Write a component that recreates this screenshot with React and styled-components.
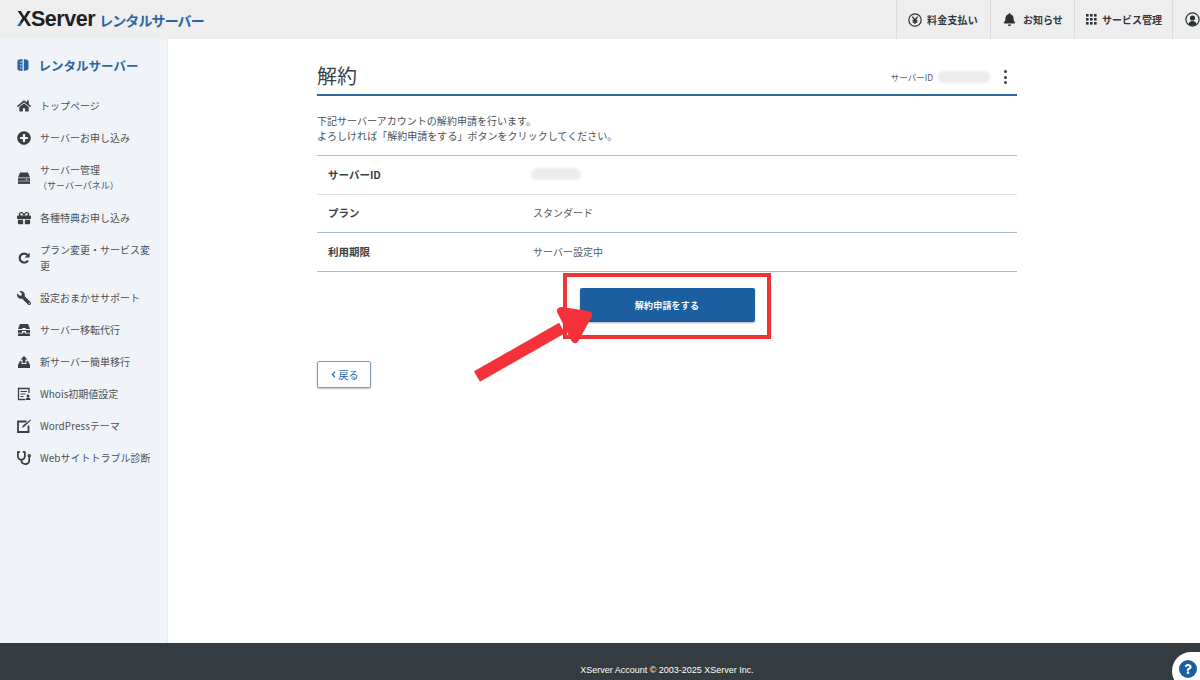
import React from "react";
import styled, { createGlobalStyle } from "styled-components";
import { FaHome, FaPlusCircle, FaGift, FaWrench, FaBell, FaStethoscope, FaChevronLeft, FaQuestion } from "react-icons/fa";

const Global = createGlobalStyle`
  html, body { margin: 0; padding: 0; height: 100%; overflow: hidden; background: #fff; }
  body { font-family: "Noto Sans CJK JP", "Noto Sans", sans-serif; color: #43484d; }
  * { box-sizing: border-box; }
`;
const Page = styled.div`width: 1200px; height: 680px; display: flex; flex-direction: column; overflow: hidden; position: relative;`;
const Header = styled.header`height: 39px; flex: none; background: #eeeeee; display: flex; align-items: center; justify-content: space-between;`;
const Logo = styled.div`display: flex; align-items: center; padding-left: 17px; gap: 4px;`;
const LogoMark = styled.span`
  font: 700 21.5px/1 "Liberation Sans", sans-serif; letter-spacing: -0.45px; color: #1d2024;
  b { font-weight: 700; background: linear-gradient(to top right, #2a66a5 32%, #1d2024 32%); -webkit-background-clip: text; background-clip: text; color: transparent; }
`;
const LogoSub = styled.span`font-size: 14px; font-weight: 700; color: #2a66a5; letter-spacing: -0.9px; line-height: 1;`;
const HeaderNav = styled.nav`display: flex; height: 100%;`;
const HeaderItem = styled.div`
  width: ${p => p.$w}px; height: 100%; display: flex; align-items: center; gap: ${p => p.$gap}px;
  padding-left: ${p => p.$pad}px; border-left: 1px solid #dcdcdc;
  font-size: 10px; font-weight: 700; color: #33383c; white-space: nowrap; letter-spacing: ${p => p.$ls || 0}px;
  svg { flex: none; }
`;
const Body = styled.div`flex: 1; display: flex; min-height: 0;`;
const Sidebar = styled.aside`width: 168px; flex: none; background: #f0f4f8; border-right: 1px solid #e6eaef; padding: 17px 0 0 17px;`;
const SideTitle = styled.div`display: flex; align-items: center; gap: 9.5px; height: 18px; font-size: 12.5px; font-weight: 700; color: #2a66a5; margin-bottom: 15.5px;`;
const SideList = styled.ul`list-style: none; margin: 0; padding: 0; display: flex; flex-direction: column;`;
const SideRow = styled.li`
  display: flex; align-items: center; gap: 9px; padding: 8px 0; min-height: 32px; width: 140px;
  font-size: 10px; line-height: 16px; color: #4c5157;
  svg { flex: none; width: 14px; height: 14px; color: #3a3f44; }
`;
const Wrench = styled(FaWrench)`transform: scaleX(-1);`;
const Sub = styled.span`display: block; font-size: 9px; margin-left: -2px;`;
const Main = styled.main`flex: 1; padding: 25px 0 0 149px;`;
const Column = styled.div`width: 700px;`;
const TitleRow = styled.div`height: 32px; border-bottom: 2px solid #2a66a5; display: flex; justify-content: space-between; align-items: center; padding-bottom: 6px;`;
const Title = styled.h1`margin: 0; font-size: 20px; font-weight: 400; color: #3a3f44; line-height: 26px;`;
const ServerId = styled.div`display: flex; align-items: center; gap: 5px; font-size: 8.5px; color: #55595e; padding: 2px 10px 0 0;`;
const Blur = styled.span`display: block; width: ${p => p.$w}px; height: ${p => p.$h}px; margin-left: ${p => p.$ml || 0}px; border-radius: 7px; background: #ececec; filter: blur(1.2px);`;
const Dots = styled.span`display: flex; flex-direction: column; gap: 2.5px; margin-left: 9px; i { width: 3px; height: 3px; border-radius: 50%; background: #3a3f44; }`;
const Intro = styled.p`margin: 16.5px 0 12.5px; font-size: 10px; line-height: 15px; color: #4c5157; letter-spacing: 0.03px;`;
const Table = styled.div`border-top: 1px solid #a9bccf;`;
const Row = styled.div`display: grid; grid-template-columns: 205px 1fr; align-items: center; height: 38.5px; padding: 0 0 1px 11px; border-bottom: ${p => p.$soft ? "1.5px solid #dde2e6" : "1px solid #a9bccf"}; font-size: 10px; color: #55595e;`;
const Cell = styled.div`font-weight: 700; font-size: 10.5px; color: #3a3f44;`;
const Action = styled.div`position: relative; display: flex; justify-content: center; padding-top: 16.5px;`;
const Primary = styled.button`width: 175px; height: 34px; background: #1b5fa0; border: 0; border-radius: 2px; box-shadow: 0 1px 2px rgba(0,0,0,.3); color: #fff; font: 700 9px "Noto Sans CJK JP", sans-serif; letter-spacing: .2px;`;
const Highlight = styled.div`position: absolute; left: 246px; top: 1.5px; width: 208px; height: 66px; border: 4px solid #ef3438; pointer-events: none;`;
const Arrow = styled.svg`position: absolute; left: 150px; top: 29.5px; pointer-events: none;`;
const Back = styled.button`
  margin-top: 39px; width: 54px; height: 27px; display: flex; align-items: center; justify-content: center; gap: 2px;
  background: #fff; border: 1px solid #7a9dbf; border-radius: 2px; box-shadow: 0 1px 2px rgba(0,0,0,.25);
  color: #2a66a5; font: 400 10px "Noto Sans CJK JP", sans-serif;
`;
const Footer = styled.footer`height: 37px; flex: none; background: #343b41; padding: 21px 0 0 317px; position: relative;`;
const FooterText = styled.div`width: 700px; text-align: center; font: 9px/12px "Liberation Sans", sans-serif; color: #fff;`;
const Help = styled.div`position: absolute; right: -10px; top: 9px; width: 38px; height: 38px; border-radius: 50% 0 0 50%; background: #fff; padding: 8px 0 0 7px;`;
const HelpDot = styled.div`width: 18px; height: 18px; border-radius: 50%; background: #1b5fa0; color: #fff; display: flex; align-items: center; justify-content: center;`;

const Book = () => (<svg width="12" height="14" viewBox="0 0 12 14"><path fill="#2a66a5" d="M5.5 1 2 1.6C1 1.8.4 2.5.4 3.5v7c0 1 .6 1.7 1.6 1.9l3.5.6z"/><path fill="#2a66a5" d="M6.8 1 10 1.8c.9.2 1.5 1 1.5 1.9v6.6c0 .9-.6 1.7-1.5 1.9L6.8 13z"/><path stroke="#f0f4f8" strokeWidth="1" d="M3 4h1.6M3 7h1.6M3 10h1.6"/></svg>);
const Yen = () => (<svg width="14" height="14" viewBox="0 0 14 14" fill="none" stroke="#2c3135"><circle cx="7" cy="7" r="6.2" strokeWidth="1.2"/><path strokeWidth="1.3" d="M4.3 3.6 7 7l2.7-3.4M7 7v4M4.6 7.5h4.8M4.6 9.2h4.8"/></svg>);
const Grid = () => (<svg width="11" height="11" viewBox="0 0 11 11" fill="#2c3135">{[0,4,8].flatMap(y => [0,4,8].map(x => <rect key={`${x}-${y}`} x={x} y={y} width="2.6" height="2.6"/>))}</svg>);
const User = () => (<svg width="15" height="15" viewBox="0 0 15 15"><circle cx="7.5" cy="7.5" r="6.6" fill="none" stroke="#2c3135" strokeWidth="1.2"/><circle cx="7.5" cy="6" r="2.6" fill="#2c3135"/><path fill="#2c3135" d="M3.4 12c.6-2 2.2-3 4.1-3s3.5 1 4.1 3c-1 1-2.5 1.5-4.1 1.5S4.4 13 3.4 12z"/></svg>);
const Server = () => (<svg viewBox="0 0 14 14" fill="currentColor"><path d="M3 1.5h8l2 5H1z"/><path fillRule="evenodd" d="M1 7.3h12v2.4H1zM9.5 8a.6.6 0 1 0 0 1.2.6.6 0 0 0 0-1.2z"/><path d="M1 10.3h12v2.6H1z"/></svg>);
const Refresh = () => (<svg viewBox="0 0 14 14" fill="none" stroke="currentColor" strokeWidth="2.2"><path d="M11 9.5A4.5 4.5 0 1 1 10.5 4"/><path fill="currentColor" stroke="none" d="M12.6 1.5v5h-5z"/></svg>);
const Move = () => (<svg viewBox="0 0 14 14" fill="currentColor"><path d="M3 1h8l2 5H8.8V5H5.2v1H1z"/><path d="M1 7h12v2.8H9V8H5v1.8H1zM1 10.6h5V9.5h2v1.1h5V13H1z"/></svg>);
const Upload = () => (<svg viewBox="0 0 14 14" fill="currentColor"><path d="M7 1l3.5 3.5H8.4V8H5.6V4.5H3.5z"/><path d="M3 6h1.5v3h5V6H11l2 4v3H1v-3z"/></svg>);
const Whois = () => (<svg viewBox="0 0 14 14" fill="none" stroke="currentColor"><path strokeWidth="1.3" d="M12 6V1.5H1.5v11H8"/><path strokeWidth="1.1" d="M3.5 4.5h6.5M3.5 7h5M3.5 9.5h3"/><circle cx="11" cy="9" r="1.4" fill="currentColor" stroke="none"/><path fill="currentColor" stroke="none" d="M8.5 13c0-1.5 1-2.4 2.5-2.4s2.5.9 2.5 2.4z"/></svg>);
const Theme = () => (<svg viewBox="0 0 14 14" fill="none" stroke="currentColor"><path strokeWidth="1.8" d="M9.5 2.5H1V13h10.5V6.5"/><path fill="currentColor" stroke="none" d="M13.5.5 14 1.2 7.5 7.5 4.8 9.2l1.4-2.9z"/></svg>);

const menu = [
  [<FaHome/>, "トップページ"],
  [<FaPlusCircle/>, "サーバーお申し込み"],
  [<Server/>, <>サーバー管理<Sub>（サーバーパネル）</Sub></>],
  [<FaGift/>, "各種特典お申し込み"],
  [<Refresh/>, "プラン変更・サービス変更"],
  [<Wrench/>, "設定おまかせサポート"],
  [<Move/>, "サーバー移転代行"],
  [<Upload/>, "新サーバー簡単移行"],
  [<Whois/>, "Whois初期値設定"],
  [<Theme/>, "WordPressテーマ"],
  [<FaStethoscope/>, "Webサイトトラブル診断"],
];

export default function App() {
  return (
    <Page>
      <Global />
      <Header>
        <Logo>
          <LogoMark><b>X</b>Server</LogoMark>
          <LogoSub>レンタルサーバー</LogoSub>
        </Logo>
        <HeaderNav>
          <HeaderItem $w={94} $gap={5} $pad={11} $ls={0.2}><Yen/>料金支払い</HeaderItem>
          <HeaderItem $w={84} $gap={7} $pad={12}><FaBell size={13} color="#2c3135"/>お知らせ</HeaderItem>
          <HeaderItem $w={98} $gap={5} $pad={11}><Grid/>サービス管理</HeaderItem>
          <HeaderItem $w={28} $gap={0} $pad={12}><User/></HeaderItem>
        </HeaderNav>
      </Header>
      <Body>
        <Sidebar>
          <SideTitle><Book/>レンタルサーバー</SideTitle>
          <SideList>
            {menu.map(([icon, label], i) => (
              <SideRow key={i}>{icon}<span>{label}</span></SideRow>
            ))}
          </SideList>
        </Sidebar>
        <Main>
          <Column>
            <TitleRow>
              <Title>解約</Title>
              <ServerId>サーバーID<Blur $w={52} $h={12}/><Dots><i/><i/><i/></Dots></ServerId>
            </TitleRow>
            <Intro>下記サーバーアカウントの解約申請を行います。<br/>よろしければ「解約申請をする」ボタンをクリックしてください。</Intro>
            <Table>
              <Row $soft><Cell>サーバーID</Cell><Blur $w={50} $h={12} $ml={-2}/></Row>
              <Row><Cell>プラン</Cell><div>スタンダード</div></Row>
              <Row><Cell>利用期限</Cell><div>サーバー設定中</div></Row>
            </Table>
            <Action>
              <Primary>解約申請をする</Primary>
              <Highlight/>
              <Arrow width="130" height="85" viewBox="0 0 130 85">
                <path d="M10 75.5 95 27" stroke="#f5323a" strokeWidth="12" fill="none"/>
                <path d="M94 10 121 14 108 38 Z" fill="#f5323a" stroke="#f5323a" strokeWidth="8" strokeLinejoin="round"/>
              </Arrow>
            </Action>
            <Back><FaChevronLeft size={7}/>戻る</Back>
          </Column>
        </Main>
      </Body>
      <Footer>
        <FooterText>XServer Account © 2003-2025 XServer Inc.</FooterText>
        <Help><HelpDot><FaQuestion size={10}/></HelpDot></Help>
      </Footer>
    </Page>
  );
}
